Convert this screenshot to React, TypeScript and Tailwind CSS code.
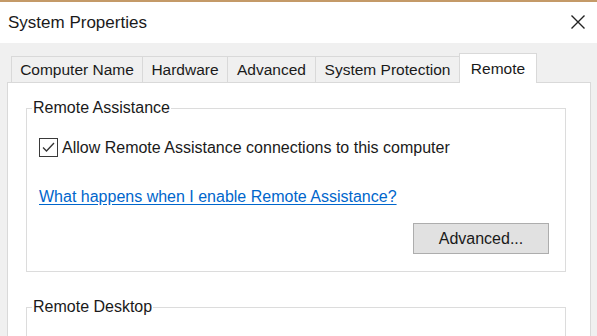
const tabs = [
  { label: 'Computer Name', width: 'w-[131px]' },
  { label: 'Hardware', width: 'w-[85px]' },
  { label: 'Advanced', width: 'w-[88px]' },
  { label: 'System Protection', width: 'w-[144px]' },
];

const CheckBox = () => (
  <span className="flex h-[19px] w-[19px] shrink-0 items-center justify-center border-[1.5px] border-[#3a3a3a] bg-white">
    <svg width="15" height="15" viewBox="0 0 15 15" fill="none">
      <path d="M2 7.5 L5.5 11 L13 3" stroke="#333" strokeWidth="1.3" />
    </svg>
  </span>
);

const App = () => {
  return (
    <div className="h-[336px] w-[597px] overflow-hidden bg-[#f0f0f0] font-['Liberation_Sans',Arial,sans-serif] text-[#1a1a1a]">
      {/* window accent border */}
      <div className="h-[2px] bg-[#c49a68]" />

      {/* title bar */}
      <div className="flex h-[41px] items-center justify-between bg-white pl-2 pr-3">
        <span className="text-[17px] leading-none">System Properties</span>
        <svg width="14" height="14" viewBox="0 0 14 14" className="mb-[1px]">
          <path d="M0.5 0.5 L13.5 13.5 M13.5 0.5 L0.5 13.5" stroke="#222" strokeWidth="1.4" />
        </svg>
      </div>

      <div className="pl-[7px] pr-[6px] pt-[10px]">
        {/* tabs */}
        <div className="ml-[4px] flex items-end">
          {tabs.map((t) => (
            <div
              key={t.label}
              className={`${t.width} flex h-[26px] items-center justify-center border-l border-t border-[#d9d9d9] bg-[#f0f0f0] pt-[1px] text-[15.5px]`}
            >
              {t.label}
            </div>
          ))}
          <div className="relative -mb-px flex h-[30px] w-[78px] items-start justify-center border-x border-t border-[#d9d9d9] bg-white pt-[3px] text-[15.5px]">
            Remote
          </div>
        </div>

        {/* tab panel */}
        <div className="h-[260px] border border-[#d9d9d9] bg-white pl-[18px] pt-[16px]">
          <fieldset className="w-[540px] border border-[#dcdcdc] pb-[17px] pl-[12px] pr-[16px]">
            <legend className="ml-[-7px] px-[1px] text-[16px] leading-[18px]">Remote Assistance</legend>
            <label className="mt-[21px] flex items-center gap-[4px] text-[16px] leading-[19px]">
              <CheckBox />
              <span>Allow Remote Assistance connections to this computer</span>
            </label>
            <div className="mt-[31px] text-[16px] leading-[18px]">
              <a href="#" className="text-[#0066cc] underline underline-offset-2">
                What happens when I enable Remote Assistance?
              </a>
            </div>
            <div className="mt-[17px] flex justify-end">
              <button className="flex h-[31px] w-[136px] items-center justify-center border border-[#adadad] bg-[#e1e1e1] text-[16px]">
                Advanced...
              </button>
            </div>
          </fieldset>

          <fieldset className="mt-[26px] h-[80px] w-[540px] border border-[#dcdcdc]">
            <legend className="ml-[5px] px-[1px] text-[16px] leading-[18px]">Remote Desktop</legend>
          </fieldset>
        </div>
      </div>
    </div>
  );
};

export default App;
